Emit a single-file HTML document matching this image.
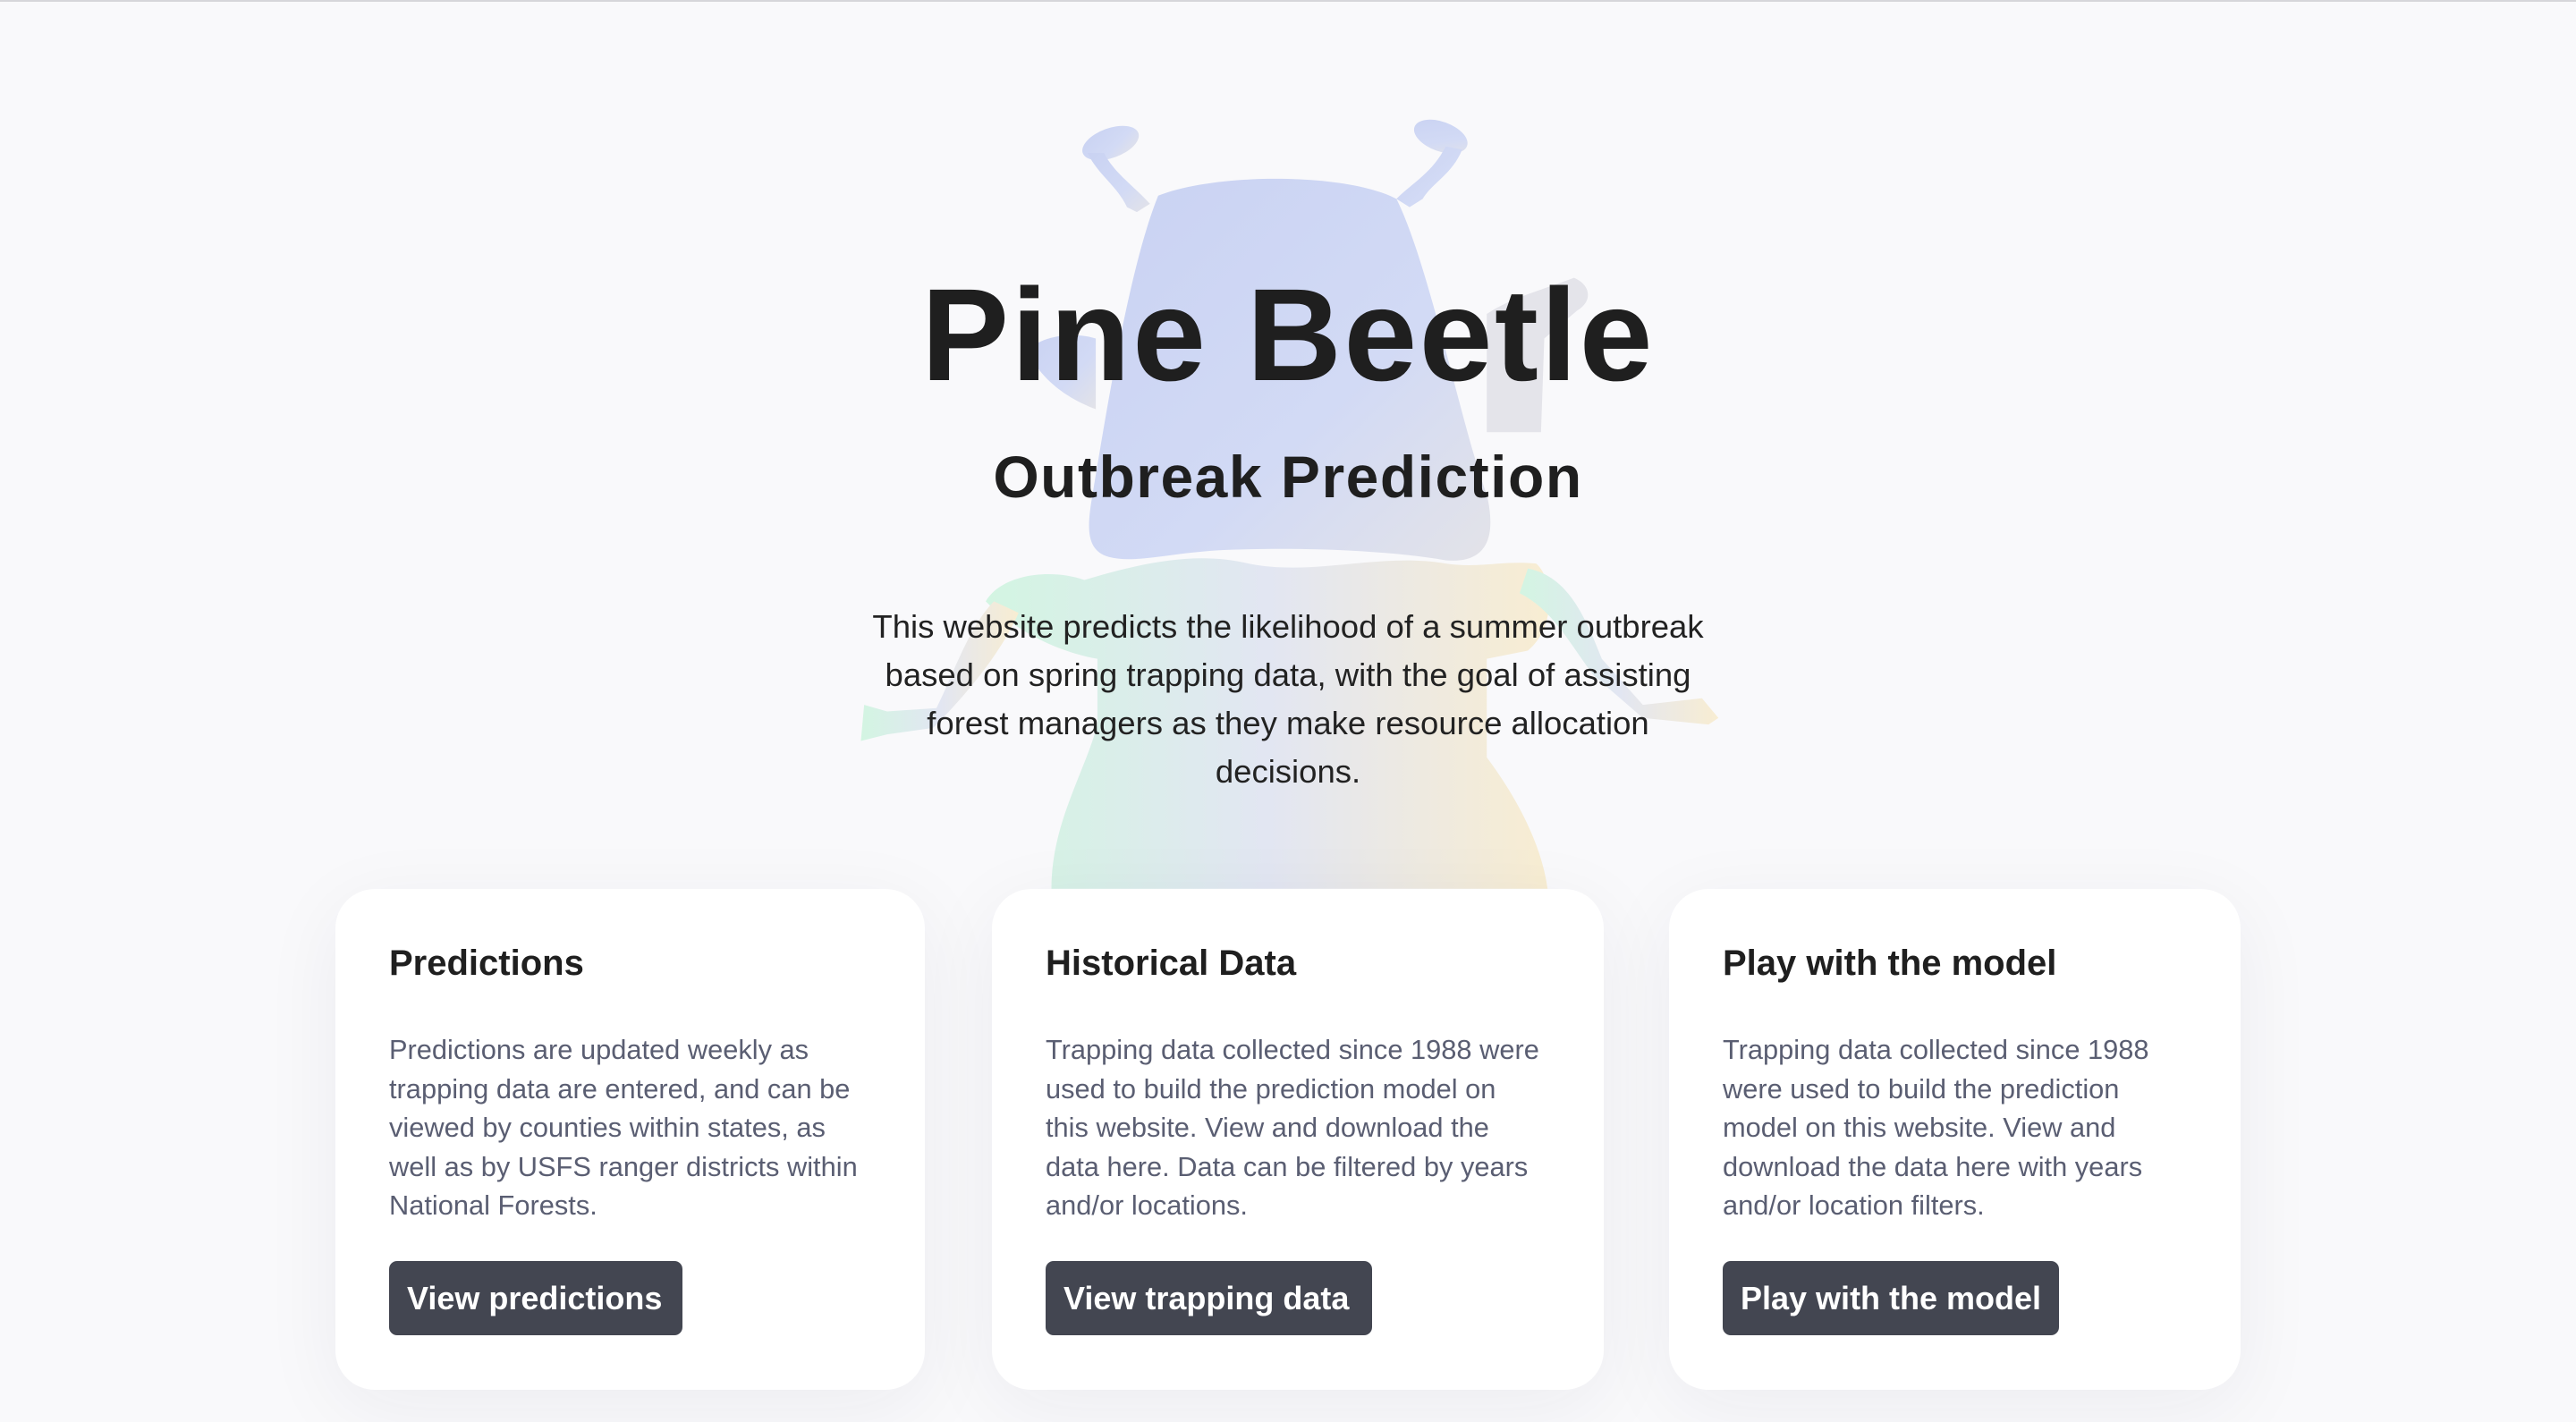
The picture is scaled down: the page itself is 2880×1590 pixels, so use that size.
<!DOCTYPE html>
<html><head><meta charset="utf-8"><style>
html,body{margin:0;padding:0}
body{width:2880px;height:1588px;background:#f9f9fb;position:relative;overflow:hidden;font-family:"Liberation Sans",sans-serif;border-top:2px solid #d6d6da;box-sizing:border-box}
.abs{position:absolute}
.t{left:0;width:2880px;text-align:center;color:#1f1f1f;white-space:nowrap}
.card{position:absolute;top:992px;height:560px;background:#fff;border-radius:44px;box-shadow:0 20px 90px rgba(30,30,60,0.06)}
.card h2{position:absolute;left:60px;top:63px;margin:0;font-size:40px;line-height:40px;font-weight:700;color:#1f1f1f;white-space:nowrap}
.card p{position:absolute;left:60px;top:158px;margin:0;font-size:30.8px;line-height:43.5px;color:#5a5e72;white-space:nowrap}
.btn{position:absolute;left:60px;top:416px;height:83px;background:#434651;border-radius:9px;color:#fff;font-size:36px;font-weight:700;line-height:83px;padding:0 20px;white-space:nowrap}
</style></head><body>
<svg class="abs" style="left:0;top:0" width="2880" height="1588" viewBox="0 0 1568 864.6">
<defs>
<linearGradient id="h" x1="0" y1="0" x2="1" y2="1">
<stop offset="0" stop-color="#c9d2f2"/><stop offset="0.6" stop-color="#d2daf5"/><stop offset="1" stop-color="#e3e3e8"/></linearGradient>
<linearGradient id="b" x1="0" y1="0" x2="1" y2="0">
<stop offset="0" stop-color="#d3f5e2"/><stop offset="0.5" stop-color="#e2e6f2"/><stop offset="1" stop-color="#f8edd2"/></linearGradient>
</defs>
<g fill="url(#h)">
<ellipse cx="676" cy="86" rx="18" ry="9" transform="rotate(-20 676 86)"/>
<ellipse cx="877" cy="82" rx="17" ry="9" transform="rotate(20 877 82)"/>
<path d="M662,92 C668,105 680,112 686,125 L692,128 L700,123 C690,112 678,104 672,92 Z"/>
<path d="M890,90 C884,105 872,110 866,120 L858,125 L850,120 C860,110 872,104 880,88 Z"/>
<path d="M705,118 C740,104 820,104 850,120 C870,160 890,260 905,300 C912,330 902,342 880,340 C840,333 780,332 740,334 C710,336 690,342 675,338 C660,334 662,318 665,300 C675,240 688,160 705,118Z"/>
<path d="M667,205 C650,200 632,205 626,212 C630,225 645,240 667,248Z"/>
</g>
<path d="M905,190 C920,180 940,175 958,168 C968,172 970,182 960,188 L940,205 L938,262 L905,262Z" fill="#e4e4ea"/>
<g fill="url(#b)">
<path d="M640,540 C640,500 660,470 668,440 L668,400 C640,395 615,380 600,365 C610,348 640,345 660,352 C700,340 730,335 760,342 C800,350 840,335 880,342 C900,345 915,340 935,342 C945,350 948,380 930,395 L905,400 L905,460 C920,480 938,510 942,540 Z"/>
<path d="M605,365 C590,380 580,410 570,430 L540,432 L526,428 L524,450 L540,446 L568,442 C590,420 610,395 620,372Z"/>
<path d="M930,345 C955,350 965,375 975,400 L1000,428 L1036,424 L1046,436 L1040,440 L1000,436 L970,410 C955,390 945,370 925,360Z"/>
</g>
</svg>
<div class="abs t" style="top:300px;font-size:147px;line-height:147px;font-weight:700;letter-spacing:2.5px">Pine Beetle</div>
<div class="abs t" style="top:492px;font-size:66px;line-height:79px;font-weight:700;letter-spacing:1.5px">Outbreak Prediction</div>
<div class="abs t" style="top:672px;font-size:36.5px;line-height:54px;color:#222">This website predicts the likelihood of a summer outbreak<br>based on spring trapping data, with the goal of assisting<br>forest managers as they make resource allocation<br>decisions.</div>
<div class="card" style="left:375px;width:659px"><h2>Predictions</h2><p>Predictions are updated weekly as<br>trapping data are entered, and can be<br>viewed by counties within states, as<br>well as by USFS ranger districts within<br>National Forests.</p><div class="btn" style="width:288px">View predictions</div></div>
<div class="card" style="left:1109px;width:684px"><h2>Historical Data</h2><p>Trapping data collected since 1988 were<br>used to build the prediction model on<br>this website. View and download the<br>data here. Data can be filtered by years<br>and/or locations.</p><div class="btn" style="width:325px">View trapping data</div></div>
<div class="card" style="left:1866px;width:639px"><h2>Play with the model</h2><p>Trapping data collected since 1988<br>were used to build the prediction<br>model on this website. View and<br>download the data here with years<br>and/or location filters.</p><div class="btn" style="width:336px">Play with the model</div></div>
</body></html>
